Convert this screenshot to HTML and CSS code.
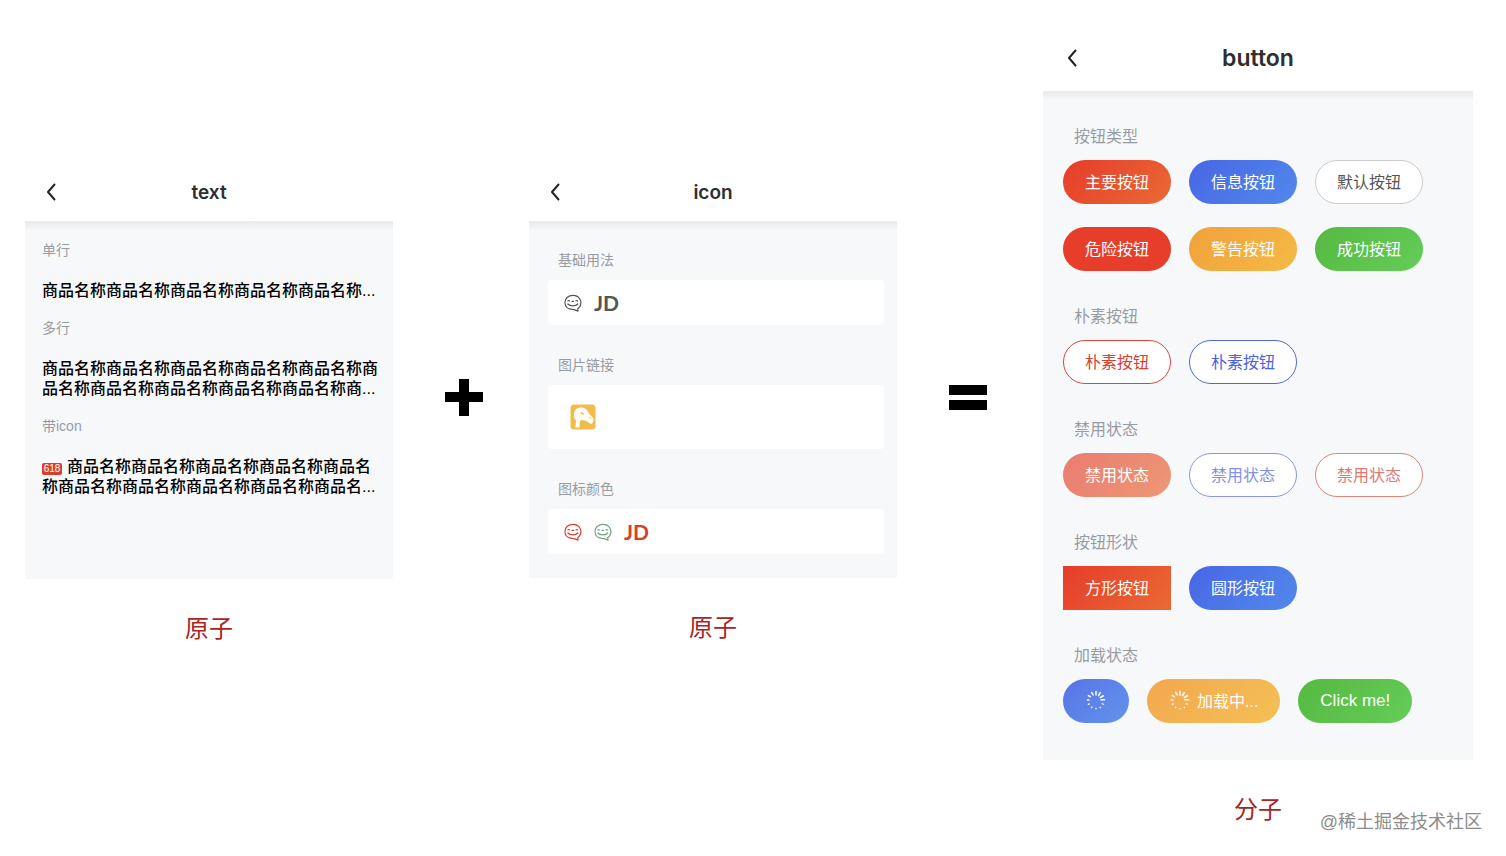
FILE: index.html
```html
<!DOCTYPE html>
<html lang="zh-CN">
<head>
    <meta charset="UTF-8">
    <meta name="viewport" content="width=device-width, initial-scale=1.0">
    <title>原子 + 原子 = 分子</title>
    <link rel="stylesheet" href="styles.css">
</head>
<body>
    <!-- Shared icons -->
    <svg class="sprite" aria-hidden="true">
        <symbol id="back" viewBox="0 0 10 18">
            <path d="M8.5 1.5 2 9l6.500 7.500" fill="none" stroke="currentColor" stroke-width="2" stroke-linecap="round" stroke-linejoin="round"/>
        </symbol>
        <symbol id="smile" viewBox="0 0 18 18">
            <g fill="none" stroke="currentColor" stroke-width="1.2" stroke-linecap="round" stroke-linejoin="round">
                <path d="M15.800 12.600C18.400 8 16 1.300 9 1.300 4 1.300.9 4.700.9 8.500c0 4.200 3.300 6.800 7.600 6.900 2 0 3.500.7 5.500 1.700l-.3-2.300c.9-.6 1.700-1.300 2.100-2.200z"/>
                <path d="M3.900 7c.3-.7 1.300-.7 1.600 0M12 7c.3-.7 1.300-.7 1.600 0M8.100 7.400h1.500"/>
                <path d="M3.900 10c2.200 2.600 7.700 2.600 9.900 0"/>
            </g>
        </symbol>
        <symbol id="spinner" viewBox="0 0 22 22">
            <g stroke="#fff" stroke-width="1.500" stroke-linecap="round">
                <path d="M11 2.500v3.500"/>
                <path d="M11 2.500v3.500" transform="rotate(30 11 11)"/>
                <path d="M11 2.500v3.500" transform="rotate(60 11 11)"/>
                <path d="M11 2.500v3.500" transform="rotate(88 11 11)"/>
                <path d="M11 2.300v1.500" transform="rotate(120 11 11)" opacity=".7"/>
                <path d="M11 2.300v.3" transform="rotate(150 11 11)"/>
                <path d="M11 2.300v.3" transform="rotate(180 11 11)"/>
                <path d="M11 2.300v.4" transform="rotate(210 11 11)"/>
                <path d="M11 2.300v.8" transform="rotate(240 11 11)"/>
                <path d="M11 2.300v1.500" transform="rotate(270 11 11)"/>
                <path d="M11 2.300v2.200" transform="rotate(300 11 11)"/>
                <path d="M11 2.300v2.900" transform="rotate(330 11 11)"/>
            </g>
        </symbol>
    </svg>

    <main class="board">
        <!-- text -->
        <section class="atom">
            <header class="bar">
                <button class="back" type="button" aria-label="返回"><svg><use href="#back"/></svg></button>
                <h2>text</h2>
            </header>
            <div class="screen text-screen">
                <h3>单行</h3>
                <p>商品名称商品名称商品名称商品名称商品名称...</p>
                <h3>多行</h3>
                <p>商品名称商品名称商品名称商品名称商品名称商品名称商品名称商品名称商品名称商品名称商...</p>
                <h3>带icon</h3>
                <p><span class="tag">618</span>商品名称商品名称商品名称商品名称商品名称商品名称商品名称商品名称商品名称商品名...</p>
            </div>
            <p class="caption">原子</p>
        </section>

        <div class="operator">
            <svg viewBox="0 0 38 38" role="img" aria-label="+"><path d="M14 1h10v13h14v10H24v14H14V24H0V14h14z"/></svg>
        </div>

        <!-- icon -->
        <section class="atom">
            <header class="bar">
                <button class="back" type="button" aria-label="返回"><svg><use href="#back"/></svg></button>
                <h2>icon</h2>
            </header>
            <div class="screen icon-screen">
                <h3>基础用法</h3>
                <div class="card">
                    <svg class="smile"><use href="#smile"/></svg>
                    <span class="jd">JD</span>
                </div>
                <h3>图片链接</h3>
                <div class="card card-tall">
                    <svg class="picture" viewBox="0 0 26 26">
                        <rect x=".5" y=".5" width="25" height="25" rx="3.500" fill="#f1bc4c"/>
                        <path d="M4 12.500C3.500 7 6 3.800 10.500 3.500c4.500-.2 6.800 2.300 8.300 5.500.8 1.800 2.500 3 4 4.300 1.300 1.200.9 4.500-.4 6-.9 1-2.100.7-2.900 0-2.400-2.100-5-3.200-8.500-3.200-1.200 1.500-1.400 4-1.400 7.400H5.200c.6-3.500.9-5.800.6-7.600-1-1-1.600-1.900-1.800-3.400z" fill="#fffdf5"/>
                        <path d="M10.500 8.300c1.600-.4 3.200.6 3.800 2.200-1.600.4-3.100-.4-3.800-2.200z" fill="#e5b64e"/>
                        <path d="M19.500 13.500l1.800.8" stroke="#f1bc4c"/>
                    </svg>
                </div>
                <h3>图标颜色</h3>
                <div class="card">
                    <svg class="smile red"><use href="#smile"/></svg>
                    <svg class="smile green"><use href="#smile"/></svg>
                    <span class="jd red">JD</span>
                </div>
            </div>
            <p class="caption">原子</p>
        </section>

        <div class="operator">
            <svg viewBox="0 0 38 38" role="img" aria-label="="><path d="M0 7h38v10H0zM0 22h38v10H0z"/></svg>
        </div>

        <!-- button -->
        <section class="molecule">
            <header class="bar">
                <button class="back" type="button" aria-label="返回"><svg><use href="#back"/></svg></button>
                <h2>button</h2>
            </header>
            <div class="screen button-screen">
                <h3>按钮类型</h3>
                <div class="buttons">
                    <button class="btn primary" type="button">主要按钮</button>
                    <button class="btn info" type="button">信息按钮</button>
                    <button class="btn default" type="button">默认按钮</button>
                    <button class="btn danger" type="button">危险按钮</button>
                    <button class="btn warning" type="button">警告按钮</button>
                    <button class="btn success" type="button">成功按钮</button>
                </div>
                <h3>朴素按钮</h3>
                <div class="buttons">
                    <button class="btn plain-red" type="button">朴素按钮</button>
                    <button class="btn plain-blue" type="button">朴素按钮</button>
                </div>
                <h3>禁用状态</h3>
                <div class="buttons">
                    <button class="btn primary" type="button" disabled>禁用状态</button>
                    <button class="btn plain-blue" type="button" disabled>禁用状态</button>
                    <button class="btn plain-red" type="button" disabled>禁用状态</button>
                </div>
                <h3>按钮形状</h3>
                <div class="buttons">
                    <button class="btn primary square" type="button">方形按钮</button>
                    <button class="btn info" type="button">圆形按钮</button>
                </div>
                <h3>加载状态</h3>
                <div class="buttons">
                    <button class="btn info loading" type="button" aria-label="加载中"><svg><use href="#spinner"/></svg></button>
                    <button class="btn warning loading" type="button"><svg><use href="#spinner"/></svg>加载中...</button>
                    <button class="btn success latin" type="button">Click me!</button>
                </div>
            </div>
            <p class="caption">分子</p>
        </section>
    </main>

    <div class="watermark">@稀土掘金技术社区</div>
</body>
</html>
```

FILE: styles.css
```css
* {
    box-sizing: border-box;
}
body {
    margin: 0;
    background-color: #fff;
    color: #000;
    font-family: "Liberation Sans", "Noto Sans CJK SC", sans-serif;
}
h2, h3, p {
    margin: 0;
}
.sprite {
    display: none;
}
.board {
    display: grid;
    grid-template-columns: 368fr 136fr 368fr 146fr 430fr;
    align-items: start;
    padding: 24px 33px 24px 25px;
}
.atom {
    min-width: 0;
    padding-top: 137px;
}
.molecule {
    min-width: 0;
}

/* Title bar */
.bar {
    display: grid;
    grid-template-columns: 1fr auto 1fr;
    align-items: center;
    height: 60px;
    padding: 2px 21px 0;
}
.bar h2 {
    color: #2e2e2e;
    font-family: Inter, sans-serif;
    font-size: 19px;
    font-weight: 600;
}
.back {
    display: flex;
    justify-self: start;
    padding: 0;
    border: none;
    background: none;
    color: #222;
    cursor: pointer;
}
.back svg {
    width: 10px;
    height: 18px;
}
.molecule .bar {
    height: 67px;
    padding: 0 24px;
}
.molecule .bar h2 {
    font-size: 23px;
}
.molecule .back svg {
    height: 20px;
}

/* Panels */
.screen {
    background: linear-gradient(#e9eaec, #f7f8fa 10px);
}
.screen h3 {
    color: #979ca3;
    font-size: 14px;
    font-weight: 400;
    line-height: 20px;
}
.caption {
    margin-top: 32px;
    color: #a8261e;
    font-size: 24px;
    line-height: 36px;
    text-align: center;
}
.operator {
    padding: 354px 0 0 52px;
}
.operator svg {
    display: block;
    width: 38px;
    height: 38px;
}

/* Text panel */
.text-screen {
    padding: 19px 14px 65px 17px;
}
.text-screen h3 {
    margin-bottom: 21px;
}
.text-screen p {
    margin-bottom: 17px;
    font-size: 16px;
    font-weight: 500;
    line-height: 20px;
}
.tag {
    display: inline-block;
    width: 20px;
    margin-right: 5px;
    border-radius: 2px;
    background-color: #d6402f;
    color: #fff;
    font-size: 10px;
    font-weight: 400;
    line-height: 12px;
    text-align: center;
}

/* Icon panel */
.icon-screen {
    padding: 29px 13px 24px 19px;
}
.icon-screen h3 {
    margin-bottom: 10px;
    padding-left: 10px;
}
.card {
    display: flex;
    align-items: center;
    gap: 12px;
    height: 45px;
    margin-bottom: 30px;
    padding: 0 16px;
    border-radius: 4px;
    background-color: #fff;
    color: #555;
}
.card:last-child {
    margin-bottom: 0;
}
.card-tall {
    height: 64px;
    padding: 0 22px;
}
.smile {
    width: 18px;
    height: 18px;
}
.picture {
    width: 26px;
    height: 26px;
}
.jd {
    font-family: Lato, sans-serif;
    font-size: 21px;
    font-weight: 700;
    line-height: 24px;
}
.red {
    color: #d6402f;
}
.green {
    color: #6fa57c;
}

/* Button panel */
.button-screen {
    padding: 35px 20px 37px;
}
.button-screen h3 {
    margin-bottom: 12px;
    padding-left: 11px;
    font-size: 16px;
    line-height: 22px;
}
.buttons {
    display: flex;
    flex-wrap: wrap;
    gap: 23px 18px;
}
.buttons + h3 {
    margin-top: 35px;
}
.btn {
    display: flex;
    align-items: center;
    gap: 6px;
    height: 44px;
    padding: 0 21px 2px;
    border: 1px solid transparent;
    border-radius: 22px;
    background-color: #fff;
    background-origin: border-box;
    color: #fff;
    font-family: inherit;
    font-size: 16px;
    cursor: pointer;
}
.btn svg {
    width: 22px;
    height: 22px;
}
.primary {
    background-image: linear-gradient(135deg, #e63c2b, #ea6a34);
}
.info {
    background-image: linear-gradient(135deg, #4866e6, #5289ea);
}
.default {
    border-color: #ccc;
    color: #555;
}
.danger {
    background-color: #e63e2b;
}
.warning {
    background-image: linear-gradient(135deg, #f2a03c, #f4ba45);
}
.success {
    background-image: linear-gradient(135deg, #55b941, #64cd58);
}
.plain-red {
    border-color: #d6483c;
    color: #d6402f;
}
.plain-blue {
    border-color: #5367dc;
    color: #4862e0;
}
.btn:disabled {
    cursor: not-allowed;
}
.primary:disabled {
    background-image: linear-gradient(135deg, #e97b71, #ed9874);
}
.plain-blue:disabled {
    border-color: #8b96e2;
    color: #8491e4;
}
.plain-red:disabled {
    border-color: #e0847c;
    color: #de7a70;
}
.square {
    border-radius: 0;
}
.loading {
    opacity: .9;
}
.latin {
    padding-bottom: 0;
    font-size: 17px;
}

.watermark {
    position: absolute;
    right: 24px;
    bottom: 21px;
    color: #8c8c8c;
    font-size: 18px;
    line-height: 26px;
}
```
